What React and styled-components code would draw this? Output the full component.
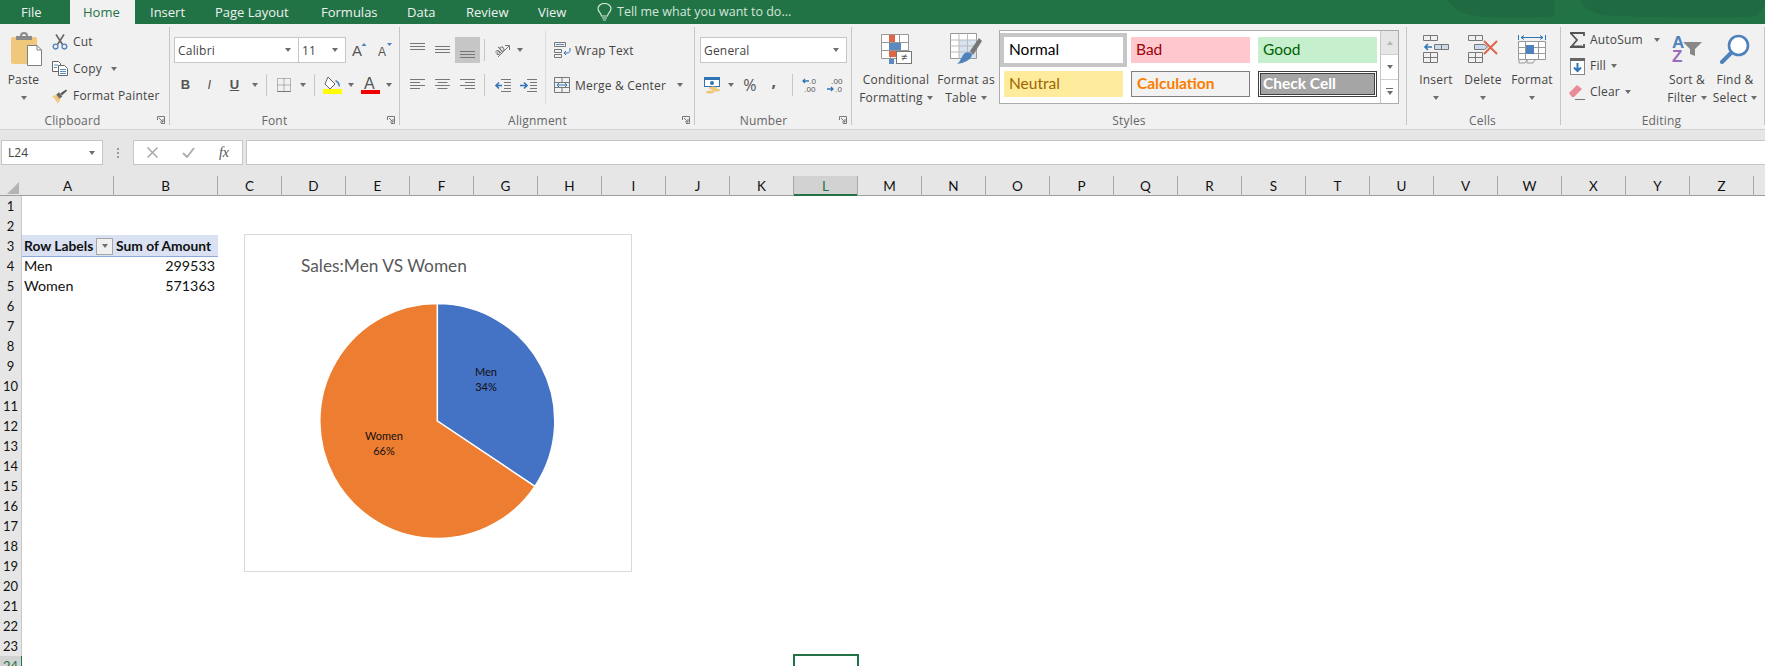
import React from "react";
import styled, { createGlobalStyle } from "styled-components";

const UI_FONT = `"Open Sans", "Noto Sans", sans-serif`;
const CELL_FONT = `Lato, "Open Sans", sans-serif`;
const GREEN = "#217346";

const COLUMNS = "ABCDEFGHIJKLMNOPQRSTUVWXYZ".split("").concat("AA");
const ROWS = Array.from({ length: 24 }, (_, i) => i + 1);
const SALES = { men: 299533, women: 571363 };

const GlobalStyle = createGlobalStyle`
  html, body {
    margin: 0;
    height: 100%;
    overflow: hidden;
    background: #fff;
  }
  * { box-sizing: border-box; }
`;

/* Title bar tabs */
const TabBar = styled.div`
  display: flex;
  height: 24px;
  background: ${GREEN};
  font: 13px/24px ${UI_FONT};
  color: #f1f1f1;
  position: relative;
  overflow: hidden;
`;

const Tab = styled.div`
  width: ${(p) => p.$w}px;
  padding-left: ${(p) => p.$pl || 15}px;
  white-space: nowrap;
  ${(p) => p.$active && `background: #f1f1f1; color: ${GREEN};`}
`;

const TellMe = styled.div`
  display: flex;
  align-items: center;
  gap: 5px;
  padding-left: 15px;
  font-size: 12.5px;
  color: #d4e5da;
  white-space: nowrap;
`;

const Watermark = styled.svg`
  position: absolute;
  right: 0;
  top: 0;
`;

/* Ribbon */
const Ribbon = styled.div`
  display: flex;
  height: 106px;
  background: #f1f1f1;
  border-bottom: 1px solid #d2d2d2;
  padding-top: 3px;
  font: 12px/18px ${UI_FONT};
  letter-spacing: 0.2px;
  color: #444;
`;

const Group = styled.section`
  width: ${(p) => p.$w}px;
  height: 98px;
  flex: none;
  border-right: 1px solid #c6c6c6;
  display: flex;
  flex-direction: column;
`;

const GroupBody = styled.div`
  display: flex;
  height: 86px;
  padding-left: ${(p) => p.$pl || 0}px;
`;

const GroupLabel = styled.div`
  position: relative;
  height: 16px;
  margin-bottom: -4px;
  line-height: 16px;
  text-align: center;
  padding-right: ${(p) => p.$pr || 0}px;
  color: #666;
`;

const LauncherMark = styled.svg`
  position: absolute;
  right: ${(p) => p.$right || 4}px;
  top: 3px;
`;

const Launcher = ({ right }) => (
  <LauncherMark $right={right} width="8" height="8" viewBox="0 0 8 8" fill="none" stroke="#777">
    <path d="M.5 4V.5H7.5V7.5H4" />
    <path d="M2 2l4 4M3 6h3V3" />
  </LauncherMark>
);

const BigButton = styled.div`
  width: ${(p) => p.$w}px;
  flex: none;
  display: flex;
  flex-direction: column;
  align-items: center;
  white-space: nowrap;
  margin-left: ${(p) => p.$ml || 0}px;
`;

const BigIcon = styled.div`
  height: 44px;
  display: flex;
  align-items: center;
  justify-content: center;
  margin-left: ${(p) => p.$shift || 0}px;
`;

const BigLine = styled.div`
  height: 18px;
  display: flex;
  align-items: center;
  gap: 4px;
`;

const SmallStack = styled.div`
  flex: none;
  width: ${(p) => p.$w}px;
  padding: ${(p) => p.$pt || 0}px 0 0 ${(p) => p.$pl || 0}px;
`;

const SmallRow = styled.div`
  height: ${(p) => p.$h || 27}px;
  display: flex;
  align-items: center;
  gap: 5px;
  white-space: nowrap;
`;

const SmallIcon = styled.span`
  width: 16px;
  display: flex;
  justify-content: center;
`;

const Caret = styled.span`
  width: 0;
  height: 0;
  flex: none;
  margin-left: ${(p) => p.$ml || 0}px;
  border-left: 3.5px solid transparent;
  border-right: 3.5px solid transparent;
  border-top: 4px solid #6e6e6e;
`;

const ToolColumn = styled.div`
  flex: none;
  width: ${(p) => p.$w}px;
  padding: 10px 0 0 ${(p) => p.$pl || 0}px;
  display: flex;
  flex-direction: column;
  gap: 9px;
`;

const SplitColumn = styled(ToolColumn)`
  position: relative;
  &::after {
    content: "";
    position: absolute;
    right: 0;
    top: 4px;
    bottom: 9px;
    width: 1px;
    background: #dcdcdc;
  }
`;

const ToolRow = styled.div`
  height: 26px;
  display: flex;
  align-items: center;
  gap: ${(p) => p.$gap || 0}px;
  white-space: nowrap;
`;

// Open Sans sits a pixel higher than the ribbon font it stands in for
const RowText = styled.span`
  padding-top: 2px;
`;

const Slot = styled.span`
  width: ${(p) => p.$w}px;
  height: 26px;
  flex: none;
  display: flex;
  align-items: center;
  justify-content: center;
  background: ${(p) => (p.$on ? "#c6c6c6" : "transparent")};
`;

const Divider = styled.span`
  width: 1px;
  height: 22px;
  flex: none;
  margin: 0 ${(p) => p.$mr ?? p.$ml}px 0 ${(p) => p.$ml}px;
  background: #c6c6c6;
`;

const Combo = styled.div`
  width: ${(p) => p.$w}px;
  height: 26px;
  flex: none;
  margin-left: ${(p) => p.$ml || 0}px;
  padding: 0 7px 0 3px;
  background: #fff;
  border: 1px solid #c6c6c6;
  display: flex;
  align-items: center;
  justify-content: space-between;
  color: #444;
`;

const FontToggle = styled.span`
  font-family: "Liberation Sans", sans-serif;
  font-size: 13px;
  color: #555;
  font-weight: ${(p) => (p.$kind === "i" ? 400 : 700)};
  font-style: ${(p) => (p.$kind === "i" ? "italic" : "normal")};
  text-decoration: ${(p) => (p.$kind === "u" ? "underline" : "none")};
`;

const PercentMark = styled.span`
  font-size: 16px;
  color: #555;
`;

const CommaMark = styled.span`
  font-size: 16px;
  font-weight: 700;
  color: #555;
  transform: translateY(-4px);
`;

/* Cell styles gallery */
const Gallery = styled.div`
  width: 400px;
  height: 74px;
  margin: 3px 0 0 7px;
  flex: none;
  display: flex;
  background: #fff;
  border: 1px solid #ababab;
`;

const GalleryGrid = styled.div`
  width: 381px;
  padding-top: 2px;
  display: grid;
  grid-template-columns: repeat(3, 127px);
  grid-auto-rows: 34px;
  border-right: 1px solid #c6c6c6;
`;

const StyleCell = styled.div`
  padding: 4px;
`;

const StyleChip = styled.div`
  height: 26px;
  padding-left: 5px;
  font: ${(p) => (p.$bold ? 700 : 400)} 15.5px/25px ${CELL_FONT};
  letter-spacing: 0;
  background: ${(p) => p.$bg};
  color: ${(p) => p.$fg};
  border: ${(p) => p.$border || "none"};
  line-height: ${(p) => (p.$border ? "23px" : "25px")};
  ${(p) => p.$selected && "outline: 4px solid #c6c6c6;"}
  ${(p) => p.$double && "box-shadow: inset 0 0 0 1px #fff, inset 0 0 0 2px #3f3f3f; padding-left: 4px;"}
`;

const GalleryScroll = styled.div`
  width: 17px;
  display: flex;
  flex-direction: column;
`;

const ScrollButton = styled.div`
  flex: 1;
  display: flex;
  flex-direction: column;
  gap: 2px;
  align-items: center;
  justify-content: center;
  background: ${(p) => (p.$off ? "#e6e6e6" : "#fff")};
  border-bottom: 1px solid #d0d0d0;
  &:last-child { border-bottom: 0; }
`;

const CaretUp = styled(Caret)`
  transform: rotate(180deg);
  opacity: ${(p) => (p.$faint ? 0.4 : 1)};
`;

const MoreBar = styled.span`
  width: 7px;
  height: 1px;
  background: #6e6e6e;
`;

/* Formula bar */
const FormulaBar = styled.div`
  height: 46px;
  background: #e6e6e6;
  padding: 10px 0 11px 1px;
  display: flex;
  font: 12px ${UI_FONT};
  color: #444;
`;

const NameBox = styled.div`
  width: 102px;
  background: #fff;
  border: 1px solid #c6c6c6;
  padding: 0 7px 0 6px;
  display: flex;
  align-items: center;
  justify-content: space-between;
`;

const Grip = styled.div`
  width: 30px;
  display: flex;
  flex-direction: column;
  gap: 2px;
  align-items: center;
  justify-content: center;
  span {
    width: 2px;
    height: 2px;
    background: #9a9a9a;
  }
`;

const FormulaButtons = styled.div`
  width: 110px;
  margin-right: 3px;
  background: #fff;
  border: 1px solid #c6c6c6;
  display: grid;
  grid-template-columns: repeat(3, 36px);
  align-items: center;
  justify-items: center;
`;

const FxMark = styled.span`
  font: italic 400 14px "Liberation Serif", serif;
  color: #555;
`;

const FormulaInput = styled.div`
  flex: 1;
  background: #fff;
  border: 1px solid #c6c6c6;
  border-right: 0;
`;

/* Worksheet */
const Sheet = styled.div`
  position: relative;
  height: 490px;
  overflow: hidden;
  background: #fff;
  font: 14.3px/20px ${CELL_FONT};
  color: #111;
`;

const COLUMN_TRACKS = "22px 92px 104px repeat(24, 64px)";

const HeaderRow = styled.div`
  display: grid;
  grid-template-columns: ${COLUMN_TRACKS};
  height: 20px;
  background: #e6e6e6;
  border-bottom: 1px solid #9e9e9e;
`;

const Corner = styled.div`
  display: flex;
  align-items: flex-end;
  justify-content: flex-end;
  padding: 0 3px 2px 0;
`;

const ColumnHead = styled.div`
  text-align: center;
  font-size: 13.5px;
  line-height: 20px;
  border-right: 1px solid #a8a8a8;
  ${(p) => p.$active && `background: #d2d2d2; box-shadow: inset 0 -2px 0 ${GREEN}; color: ${GREEN};`}
`;

const SheetRow = styled.div`
  display: grid;
  grid-template-columns: ${COLUMN_TRACKS};
  height: 20px;
`;

const RowHead = styled.div`
  text-align: center;
  font-size: 13px;
  line-height: 20px;
  background: #e6e6e6;
  border-bottom: 1px solid #a8a8a8;
  border-right: 1px solid ${(p) => (p.$active ? GREEN : "#c6c6c6")};
  ${(p) => p.$active && `background: #d2d2d2; color: ${GREEN};`}
`;

const Cell = styled.div`
  padding: 0 3px 0 2px;
  white-space: nowrap;
  text-align: ${(p) => (p.$num ? "right" : "left")};
`;

const HeadCell = styled.div`
  padding-left: 2px;
  white-space: nowrap;
  background: #d9e1f2;
  box-shadow: 0 -1px 0 #d9e1f2;
  border-bottom: 1px solid #8ea9db;
  font-size: 13.8px;
  font-weight: 700;
  line-height: 20px;
  display: flex;
  justify-content: space-between;
  align-items: center;
`;

const FilterButton = styled.span`
  width: 17px;
  height: 17px;
  margin-right: 1px;
  background: #f0f0f0;
  border: 1px solid #a6a6a6;
  display: flex;
  align-items: center;
  justify-content: center;
`;

const SelectedCell = styled.div`
  position: absolute;
  left: 793px;
  top: 478px;
  width: 66px;
  height: 30px;
  border: 2px solid ${GREEN};
`;

const Chart = styled.div`
  position: absolute;
  left: 244px;
  top: 58px;
  width: 388px;
  height: 338px;
  background: #fff;
  border: 1px solid #d9d9d9;
`;

const ChartTitle = styled.div`
  height: 66px;
  padding: 19px 0 0 56px;
  font: 17.3px/24px ${CELL_FONT};
  color: #595959;
`;

const PieSvg = styled.svg`
  display: block;
  margin: 0 auto;
  text {
    font: 11px ${CELL_FONT};
    fill: #111;
    text-anchor: middle;
  }
`;

/* Icons */
const Svg = ({ w, h, children }) => (
  <svg width={w} height={h} viewBox={`0 0 ${w} ${h}`} fill="none">
    {children}
  </svg>
);

const PasteIcon = () => (
  <Svg w={31} h={34}>
    <rect x="0" y="5" width="26" height="27" rx="2" fill="#f0c87c" />
    <rect x="5" y="4" width="16" height="4" fill="#8a8a8a" />
    <path d="M10 4a3 3 0 0 1 6 0" stroke="#8a8a8a" strokeWidth="2" />
    <path d="M16.500 13.500H26l4.500 4.500v15.500h-14z" fill="#fff" stroke="#808080" />
    <path d="M26 13.500V18h4.500" stroke="#808080" />
  </Svg>
);

const CutIcon = () => (
  <Svg w={16} h={16}>
    <path d="M4 .5l6.500 10M12 .5L5.500 10.500" stroke="#666" strokeWidth="1.600" />
    <circle cx="3.600" cy="12.600" r="2.400" stroke="#4f81bd" strokeWidth="1.300" />
    <circle cx="12.400" cy="12.600" r="2.400" stroke="#4f81bd" strokeWidth="1.300" />
  </Svg>
);

const CopyIcon = () => (
  <Svg w={16} h={15}>
    <path d="M.5.5h6l2 2v8H.5z" fill="#fff" stroke="#666" />
    <path d="M6.500 4.500h6l3 3v7h-9z" fill="#fff" stroke="#666" />
    <path d="M2 4h4M2 6.500h3M8 8.500h6M8 10.500h6M8 12.500h6" stroke="#5a8ac0" />
  </Svg>
);

const PainterIcon = () => (
  <Svg w={17} h={16}>
    <path d="M0 8l5-1 4 5-3 4C4 12 2 10 0 8z" fill="#f0c87c" />
    <path d="M4.500 6.500l3-2.500 3.500 4.500-3 2.500z" fill="#666" />
    <path d="M9 5l6-4 1 1.500-5.500 5z" fill="#555" />
  </Svg>
);

const LetterSize = ({ size, up }) => (
  <Svg w={15} h={15}>
    <text x="0" y="13" fontSize={size} fill="#555" fontFamily="Liberation Sans">A</text>
    <path d={up ? "M12 0l2.500 3h-5z" : "M9 0h5l-2.500 3z"} fill="#4f81bd" />
  </Svg>
);

const BordersIcon = () => (
  <Svg w={14} h={14}>
    <path d="M.5.5h13v13H.5zM7 .5v13M.5 7h13" stroke="#777" strokeDasharray="1 1" />
    <path d="M.5 13.500h13" stroke="#777" />
  </Svg>
);

const FillColorIcon = () => (
  <Svg w={19} h={18}>
    <path d="M5 1l7 7-5 5-5-5z" fill="#fff" stroke="#666" />
    <path d="M13 4c2 1 4 3 4 6l-1 1c-1-3-2-5-4-6z" fill="#4f81bd" />
    <rect y="13" width="19" height="5" fill="#ffff00" />
  </Svg>
);

const FontColorIcon = () => (
  <Svg w={19} h={18}>
    <text x="3" y="13" fontSize="16" fontFamily="Liberation Sans" fill="#555">A</text>
    <rect y="14" width="19" height="4" fill="#f00000" />
  </Svg>
);

const AlignLines = ({ ys, widths, align }) => (
  <Svg w={15} h={16}>
    {ys.map((y, i) => {
      const w = widths ? widths[i] : 15;
      const x = align === "right" ? 15 - w : align === "center" ? (15 - w) / 2 : 0;
      return <rect key={y} x={x} y={y} width={w} height="1" fill="#777" />;
    })}
  </Svg>
);

const OrientationIcon = () => (
  <Svg w={17} h={16}>
    <text x="1" y="11" fontSize="9" fontFamily="Liberation Sans" fill="#555" transform="rotate(-40 6 9)">ab</text>
    <path d="M4 15L15 4M11 3.500h4.500V8" stroke="#777" />
  </Svg>
);

const IndentIcon = ({ more }) => (
  <Svg w={17} h={13}>
    <path d="M7 .5h10M10 3.500h7M10 6.500h7M10 9.500h7M7 12.500h10" stroke="#777" />
    {more ? (
      <path d="M0 6.500h6M4 3.500l3 3-3 3" stroke="#2f75b5" strokeWidth="1.600" />
    ) : (
      <path d="M8 6.500H2M5 3.500l-3 3 3 3" stroke="#2f75b5" strokeWidth="1.600" />
    )}
  </Svg>
);

const WrapIcon = () => (
  <Svg w={17} h={16}>
    <path d="M.5.5h11v4H.5zM.5 7.500h7v3H.5zM.5 12.500h7v3H.5z" stroke="#777" />
    <path d="M2 2.500h8" stroke="#5a8ac0" />
    <path d="M16 6v2c0 2-1 3-3 3h-3M12 9l-2 2 2 2" stroke="#2f75b5" />
  </Svg>
);

const MergeIcon = () => (
  <Svg w={17} h={16}>
    <path d="M.5.5h15v15H.5zM.5 5.500h15M.5 10.500h15M8 .5v5M8 10.500v5" stroke="#777" />
    <path d="M3 8h10M5 6l-2 2 2 2M11 6l2 2-2 2" stroke="#2f75b5" />
  </Svg>
);

const CurrencyIcon = () => (
  <Svg w={17} h={17}>
    <rect x=".5" y=".5" width="15" height="9" fill="#fff" stroke="#2f75b5" />
    <rect x="1" y="1" width="14" height="2" fill="#2f75b5" />
    <circle cx="8" cy="6" r="2" fill="#2f75b5" />
    <ellipse cx="9" cy="11" rx="4" ry="1.500" fill="#f0c87c" />
    <ellipse cx="12" cy="13" rx="4" ry="1.500" fill="#f0c87c" />
    <ellipse cx="6" cy="15" rx="4" ry="1.500" fill="#f0c87c" />
  </Svg>
);

const DecimalIcon = ({ more }) => (
  <Svg w={16} h={15}>
    <g fontSize="8" fontFamily="Liberation Sans" fill="#555">
      <text x={more ? 7 : 4} y="6">{more ? ".0" : ".00"}</text>
      <text x={more ? 2 : 8} y="14">{more ? ".00" : ".0"}</text>
    </g>
    {more ? (
      <path d="M7 3H1M3 1L1 3l2 2" stroke="#2f75b5" strokeWidth="1.300" />
    ) : (
      <path d="M0 11h6M4 9l2 2-2 2" stroke="#2f75b5" strokeWidth="1.300" />
    )}
  </Svg>
);

const ConditionalIcon = () => (
  <Svg w={31} h={30}>
    <path d="M.5.5h27v24H.5zM.5 8.500h27M.5 16.500h27M9.500.5v24M18.500.5v24" stroke="#999" fill="#fff" />
    <rect x="8" y="1" width="6" height="7" fill="#e0664a" />
    <rect x="8" y="9" width="12" height="7" fill="#5a8ac0" />
    <rect x="8" y="17" width="8" height="6" fill="#e0664a" />
    <rect x="8" y="25" width="5" height="5" fill="#5a8ac0" />
    <rect x="15.500" y="17.500" width="15" height="12" fill="#fff" stroke="#777" />
    <text x="23" y="27" fontSize="11" textAnchor="middle" fontFamily="Liberation Sans" fill="#555">≠</text>
  </Svg>
);

const TableIcon = () => (
  <Svg w={32} h={33}>
    <path d="M.5.5h26v25H.5z" fill="#fff" stroke="#999" />
    <rect x="9" y="7" width="17" height="18" fill="#d6e3f0" />
    <path d="M.5 7h26M.5 13h26M.5 19h26M9 .5v25M17.500.5v25" stroke="#bbb" />
    <path d="M20 18L29 5l3 3-9 14z" fill="#777" />
    <path d="M13 22c3-4 9-3 9 0-1 5-8 8-15 9 3-2 4-6 6-9z" fill="#4f81bd" />
  </Svg>
);

const InsertIcon = () => (
  <Svg w={27} h={28}>
    <path d="M.5.5h7v5H.5zM7.500.5h7v5h-7zM.5 17.500h7v5H.5zM7.500 17.500h7v5h-7zM.5 22.500h7v5H.5zM7.500 22.500h7v5h-7z" stroke="#777" />
    <path d="M11.500 9.500h7v5h-7zM18.500 9.500h7v5h-7z" fill="#c9daea" stroke="#777" />
    <path d="M9 12H2M5 9l-3 3 3 3" stroke="#2f75b5" strokeWidth="1.600" />
  </Svg>
);

const DeleteIcon = () => (
  <Svg w={30} h={28}>
    <path d="M.5.5h7v5H.5zM7.500.5h7v5h-7zM.5 17.500h7v5H.5zM7.500 17.500h7v5h-7zM.5 22.500h7v5H.5zM7.500 22.500h7v5h-7z" stroke="#777" />
    <path d="M6.500 9.500h10l3 2.500-3 2.500h-10z" fill="#c9daea" stroke="#777" />
    <path d="M16 6l13 13M29 6L16 19" stroke="#e0664a" strokeWidth="2" />
  </Svg>
);

const FormatIcon = () => (
  <Svg w={28} h={30}>
    <path d="M.5 1v5M27.500 1v5M3 3.500h22M6 1.500l-3 2 3 2M22 1.500l3 2-3 2" stroke="#2f75b5" />
    <path d="M.5 7.500h27v18H.5zM7.500 7.500v18M20.500 7.500v18M.5 13.500h27M.5 19.500h27" stroke="#999" fill="#fff" />
    <rect x="8" y="11" width="8" height="9" fill="#4f81bd" />
    <path d="M1 26v3h6l2-3M9 26v3h6l2-3" stroke="#999" />
  </Svg>
);

const SigmaIcon = () => (
  <Svg w={16} h={16}>
    <path d="M1 1h14v3M13 14.500H2.500L8 8 2 1.500M1 15h14v-3" stroke="#555" strokeWidth="1.800" />
  </Svg>
);

const FillDownIcon = () => (
  <Svg w={15} h={17}>
    <rect x=".5" y=".5" width="14" height="16" fill="#fff" stroke="#888" />
    <rect x="0" y="0" width="15" height="3" fill="#666" />
    <path d="M7.500 5v8M4 9.500l3.500 3.500L11 9.500" stroke="#2f75b5" strokeWidth="2" />
  </Svg>
);

const EraserIcon = () => (
  <Svg w={16} h={15}>
    <path d="M0 8l8-8 5 4-8 8H3z" fill="#ea8a98" />
    <path d="M6 14.500h10" stroke="#777" />
  </Svg>
);

const SortIcon = () => (
  <Svg w={30} h={28}>
    <text x="0" y="13" fontSize="17" fontWeight="700" fontFamily="Liberation Sans" fill="#4f81bd">A</text>
    <text x="0" y="27" fontSize="17" fontWeight="700" fontFamily="Liberation Sans" fill="#9b6bbd">Z</text>
    <path d="M11 7h19l-7 7v7l-5-2v-5z" fill="#888" />
  </Svg>
);

const FindIcon = () => (
  <Svg w={30} h={30}>
    <circle cx="18.500" cy="11.500" r="9.500" stroke="#4f81bd" strokeWidth="2.600" fill="#fff" />
    <path d="M11 19L2 28" stroke="#4f81bd" strokeWidth="4" strokeLinecap="round" />
  </Svg>
);

const BulbIcon = () => (
  <Svg w={15} h={18}>
    <path d="M4.500 13c0-3-3.500-4-3.500-7.500a6.500 5 0 0 1 13 0C14 9 10.500 10 10.500 13z" stroke="#d4e5da" strokeWidth="1.200" />
    <path d="M5 15h5M6 17h3" stroke="#d4e5da" />
  </Svg>
);

const CrossIcon = () => (
  <Svg w={11} h={11}>
    <path d="M.5.5l10 10M10.500.5l-10 10" stroke="#a8a8a8" strokeWidth="1.500" />
  </Svg>
);

const TickIcon = () => (
  <Svg w={13} h={11}>
    <path d="M1 6l4 4 7-9" stroke="#b0b0b0" strokeWidth="2" />
  </Svg>
);

const SheetCorner = () => (
  <Svg w={12} h={12}>
    <path d="M12 0v12H0z" fill="#b4b4b4" />
  </Svg>
);

const pieSlice = (cx, cy, r, from, to) => {
  const pt = (a) => [cx + r * Math.sin(a * 2 * Math.PI), cy - r * Math.cos(a * 2 * Math.PI)];
  const [x1, y1] = pt(from);
  const [x2, y2] = pt(to);
  return `M${cx} ${cy}L${x1} ${y1}A${r} ${r} 0 ${to - from > 0.5 ? 1 : 0} 1 ${x2} ${y2}Z`;
};

const SalesPie = () => {
  const men = SALES.men / (SALES.men + SALES.women);
  return (
    <PieSvg width="240" height="240" viewBox="0 0 240 240">
      <path d={pieSlice(119.3, 120, 117.5, 0, men)} fill="#4472c4" stroke="#fff" strokeWidth="1.500" />
      <path d={pieSlice(119.3, 120, 117.5, men, 1)} fill="#ed7d31" stroke="#fff" strokeWidth="1.500" />
      <text x="168" y="75">Men</text>
      <text x="168" y="90">34%</text>
      <text x="66" y="139">Women</text>
      <text x="66" y="154">66%</text>
    </PieSvg>
  );
};

const TABS = [
  { name: "File", w: 70, pl: 21 },
  { name: "Home", w: 65, pl: 13, active: true },
  { name: "Insert", w: 65 },
  { name: "Page Layout", w: 106 },
  { name: "Formulas", w: 86 },
  { name: "Data", w: 59 },
  { name: "Review", w: 72 },
  { name: "View", w: 59 },
];

const CELL_STYLES = [
  { name: "Normal", bg: "#fff", fg: "#000", selected: true },
  { name: "Bad", bg: "#ffc7ce", fg: "#9c0006" },
  { name: "Good", bg: "#c6efce", fg: "#006100" },
  { name: "Neutral", bg: "#ffeb9c", fg: "#9c6500" },
  { name: "Calculation", bg: "#f2f2f2", fg: "#fa7d00", bold: true, border: "1px solid #7f7f7f" },
  { name: "Check Cell", bg: "#a5a5a5", fg: "#fff", bold: true, border: "1px solid #3f3f3f", double: true },
];

export default function App() {
  return (
    <>
      <GlobalStyle />
      <TabBar>
        {TABS.map((t) => (
          <Tab key={t.name} $w={t.w} $pl={t.pl} $active={t.active}>
            {t.name}
          </Tab>
        ))}
        <TellMe>
          <BulbIcon />
          Tell me what you want to do...
        </TellMe>
        <Watermark width="317" height="24" viewBox="0 0 317 24" fill="#1f6a40">
          <path d="M0 0c6 10 16 16 40 17 20 1 50 1 65-1 3-5 2-11 0-16zM132 0c4 10 14 15 40 16 50 2 120 2 135 0 5-3 8-8 10-12V0z" />
        </Watermark>
      </TabBar>

      <Ribbon>
        <Group $w={170}>
          <GroupBody>
            <BigButton $w={47}>
              <BigIcon $shift={6}><PasteIcon /></BigIcon>
              <BigLine>Paste</BigLine>
              <BigLine><Caret /></BigLine>
            </BigButton>
            <SmallStack $w={122} $pl={5} $pt={1}>
              <SmallRow><SmallIcon><CutIcon /></SmallIcon>Cut</SmallRow>
              <SmallRow><SmallIcon><CopyIcon /></SmallIcon>Copy<Caret $ml={4} /></SmallRow>
              <SmallRow><SmallIcon><PainterIcon /></SmallIcon>Format Painter</SmallRow>
            </SmallStack>
          </GroupBody>
          <GroupLabel $pr={24}>Clipboard<Launcher /></GroupLabel>
        </Group>

        <Group $w={230}>
          <GroupBody $pl={4}>
            <ToolColumn $w={225}>
              <ToolRow>
                <Combo $w={125}><RowText>Calibri</RowText><Caret /></Combo>
                <Combo $w={48} $ml={-1}><RowText>11</RowText><Caret /></Combo>
                <Slot $w={26}><LetterSize size={15} up /></Slot>
                <Slot $w={26}><LetterSize size={12} /></Slot>
              </ToolRow>
              <ToolRow>
                <Slot $w={23}><FontToggle>B</FontToggle></Slot>
                <Slot $w={25}><FontToggle $kind="i">I</FontToggle></Slot>
                <Slot $w={25}><FontToggle $kind="u">U</FontToggle></Slot>
                <Slot $w={16}><Caret /></Slot>
                <Divider $ml={3} />
                <Slot $w={27}><BordersIcon /></Slot>
                <Slot $w={12}><Caret /></Slot>
                <Divider $ml={5} />
                <Slot $w={25}><FillColorIcon /></Slot>
                <Slot $w={12}><Caret /></Slot>
                <Slot $w={27}><FontColorIcon /></Slot>
                <Slot $w={10}><Caret /></Slot>
              </ToolRow>
            </ToolColumn>
          </GroupBody>
          <GroupLabel $pr={20}>Font<Launcher /></GroupLabel>
        </Group>

        <Group $w={295}>
          <GroupBody>
            <SplitColumn $w={146} $pl={5}>
              <ToolRow>
                <Slot $w={25}><AlignLines ys={[1, 4, 7]} /></Slot>
                <Slot $w={25}><AlignLines ys={[4, 7, 10]} /></Slot>
                <Slot $w={25} $on><AlignLines ys={[9, 12, 15]} /></Slot>
                <Divider $ml={4} />
                <Slot $w={26}><OrientationIcon /></Slot>
                <Slot $w={9}><Caret /></Slot>
              </ToolRow>
              <ToolRow>
                <Slot $w={25}><AlignLines ys={[2, 5, 8, 11]} widths={[15, 10, 15, 10]} /></Slot>
                <Slot $w={25}><AlignLines ys={[2, 5, 8, 11]} widths={[15, 10, 15, 10]} align="center" /></Slot>
                <Slot $w={25}><AlignLines ys={[2, 5, 8, 11]} widths={[15, 10, 15, 10]} align="right" /></Slot>
                <Divider $ml={4} />
                <Slot $w={26}><IndentIcon /></Slot>
                <Slot $w={26}><IndentIcon more /></Slot>
              </ToolRow>
            </SplitColumn>
            <ToolColumn $w={148} $pl={8}>
              <ToolRow $gap={4}>
                <WrapIcon />
                <RowText>Wrap Text</RowText>
              </ToolRow>
              <ToolRow $gap={4}>
                <MergeIcon />
                <RowText>Merge &amp; Center</RowText>
                <Caret $ml={7} />
              </ToolRow>
            </ToolColumn>
          </GroupBody>
          <GroupLabel $pr={19}>Alignment<Launcher /></GroupLabel>
        </Group>

        <Group $w={157}>
          <GroupBody $pl={5}>
            <ToolColumn $w={150}>
              <ToolRow><Combo $w={147}><RowText>General</RowText><Caret /></Combo></ToolRow>
              <ToolRow>
                <Slot $w={24}><CurrencyIcon /></Slot>
                <Slot $w={14}><Caret /></Slot>
                <Slot $w={24}><PercentMark>%</PercentMark></Slot>
                <Slot $w={24}><CommaMark>,</CommaMark></Slot>
                <Divider $ml={6} $mr={4} />
                <Slot $w={25}><DecimalIcon more /></Slot>
                <Slot $w={25}><DecimalIcon /></Slot>
              </ToolRow>
            </ToolColumn>
          </GroupBody>
          <GroupLabel $pr={19}>Number<Launcher /></GroupLabel>
        </Group>

        <Group $w={555}>
          <GroupBody>
            <BigButton $w={88}>
              <BigIcon><ConditionalIcon /></BigIcon>
              <BigLine>Conditional</BigLine>
              <BigLine>Formatting<Caret /></BigLine>
            </BigButton>
            <BigButton $w={52}>
              <BigIcon><TableIcon /></BigIcon>
              <BigLine>Format as</BigLine>
              <BigLine>Table<Caret /></BigLine>
            </BigButton>
            <Gallery>
              <GalleryGrid>
                {CELL_STYLES.map((s) => (
                  <StyleCell key={s.name}>
                    <StyleChip $bg={s.bg} $fg={s.fg} $bold={s.bold} $border={s.border} $double={s.double} $selected={s.selected}>
                      {s.name}
                    </StyleChip>
                  </StyleCell>
                ))}
              </GalleryGrid>
              <GalleryScroll>
                <ScrollButton $off><CaretUp $faint /></ScrollButton>
                <ScrollButton><Caret /></ScrollButton>
                <ScrollButton><MoreBar /><Caret /></ScrollButton>
              </GalleryScroll>
            </Gallery>
          </GroupBody>
          <GroupLabel>Styles</GroupLabel>
        </Group>

        <Group $w={154}>
          <GroupBody>
            <BigButton $w={54} $ml={2}>
              <BigIcon><InsertIcon /></BigIcon>
              <BigLine>Insert</BigLine>
              <BigLine><Caret /></BigLine>
            </BigButton>
            <BigButton $w={40}>
              <BigIcon><DeleteIcon /></BigIcon>
              <BigLine>Delete</BigLine>
              <BigLine><Caret /></BigLine>
            </BigButton>
            <BigButton $w={58}>
              <BigIcon><FormatIcon /></BigIcon>
              <BigLine>Format</BigLine>
              <BigLine><Caret /></BigLine>
            </BigButton>
          </GroupBody>
          <GroupLabel $pr={2}>Cells</GroupLabel>
        </Group>

        <Group $w={204}>
          <GroupBody>
            <SmallStack $w={104} $pl={8}>
              <SmallRow $h={26}><SmallIcon><SigmaIcon /></SmallIcon>AutoSum<Caret $ml={6} /></SmallRow>
              <SmallRow $h={26}><SmallIcon><FillDownIcon /></SmallIcon>Fill<Caret /></SmallRow>
              <SmallRow $h={26}><SmallIcon><EraserIcon /></SmallIcon>Clear<Caret /></SmallRow>
            </SmallStack>
            <BigButton $w={44}>
              <BigIcon><SortIcon /></BigIcon>
              <BigLine>Sort &amp;</BigLine>
              <BigLine>Filter<Caret /></BigLine>
            </BigButton>
            <BigButton $w={52}>
              <BigIcon><FindIcon /></BigIcon>
              <BigLine>Find &amp;</BigLine>
              <BigLine>Select<Caret /></BigLine>
            </BigButton>
          </GroupBody>
          <GroupLabel $pr={2}>Editing</GroupLabel>
        </Group>
      </Ribbon>

      <FormulaBar>
        <NameBox>L24<Caret /></NameBox>
        <Grip><span /><span /><span /></Grip>
        <FormulaButtons>
          <CrossIcon />
          <TickIcon />
          <FxMark>fx</FxMark>
        </FormulaButtons>
        <FormulaInput />
      </FormulaBar>

      <Sheet>
        <HeaderRow>
          <Corner><SheetCorner /></Corner>
          {COLUMNS.map((c) => (
            <ColumnHead key={c} $active={c === "L"}>{c}</ColumnHead>
          ))}
        </HeaderRow>
        {ROWS.map((n) => (
          <SheetRow key={n}>
            <RowHead $active={n === 24}>{n}</RowHead>
            {n === 3 && (
              <>
                <HeadCell>
                  Row Labels
                  <FilterButton><Caret /></FilterButton>
                </HeadCell>
                <HeadCell>Sum of Amount</HeadCell>
              </>
            )}
            {n === 4 && (
              <>
                <Cell>Men</Cell>
                <Cell $num>{SALES.men}</Cell>
              </>
            )}
            {n === 5 && (
              <>
                <Cell>Women</Cell>
                <Cell $num>{SALES.women}</Cell>
              </>
            )}
          </SheetRow>
        ))}
        <Chart>
          <ChartTitle>Sales:Men VS Women</ChartTitle>
          <SalesPie />
        </Chart>
        <SelectedCell />
      </Sheet>
    </>
  );
}
